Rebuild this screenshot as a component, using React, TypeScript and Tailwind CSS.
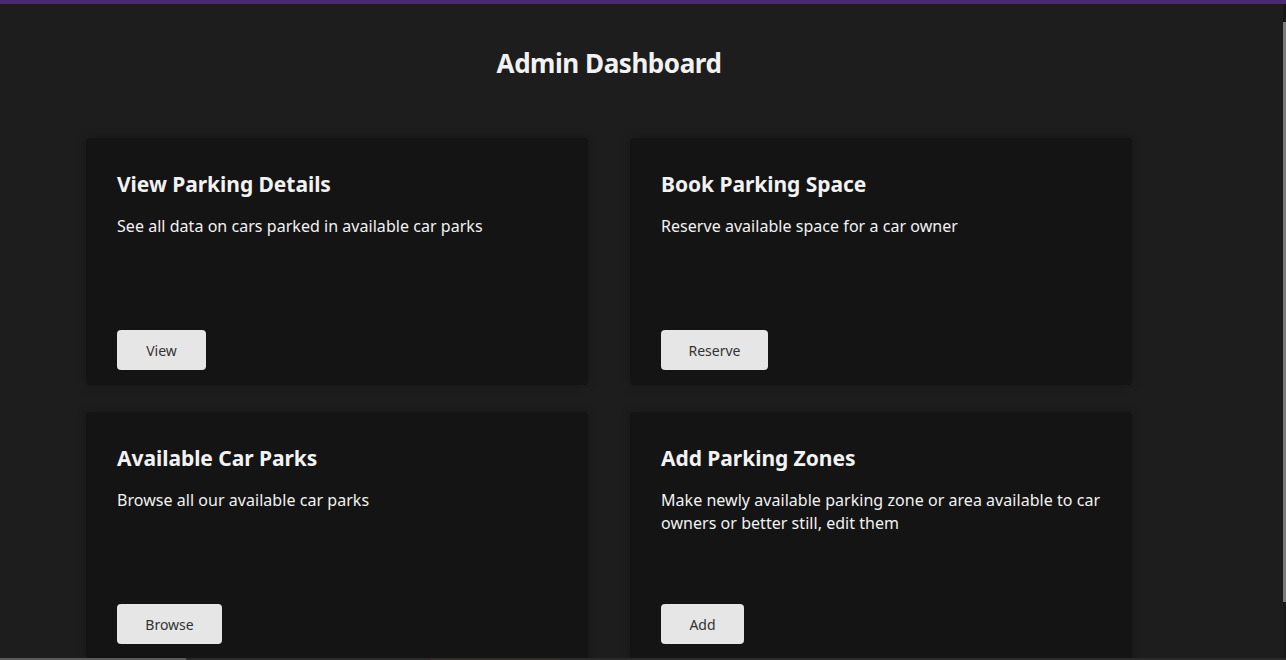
import React from "react";

const cards = [
  { title: "View Parking Details", desc: "See all data on cars parked in available car parks", btn: "View", w: "w-[89px]" },
  { title: "Book Parking Space", desc: "Reserve available space for a car owner", btn: "Reserve", w: "w-[107px]" },
  { title: "Available Car Parks", desc: "Browse all our available car parks", btn: "Browse", w: "w-[105px]" },
  { title: "Add Parking Zones", desc: "Make newly available parking zone or area available to car owners or better still, edit them", btn: "Add", w: "w-[83px]" },
];

export default function App() {
  return (
    <div
      className="h-[660px] w-[1286px] overflow-hidden flex flex-col bg-[#1d1d1d] text-[#f2f2f2]"
      style={{ fontFamily: '"Noto Sans", "Open Sans", sans-serif' }}
    >
      <div className="h-[4px] bg-[#4a2a72] shrink-0" />
      <div className="flex flex-1 overflow-hidden">
        <div className="flex-1 overflow-hidden">
          <div className="ml-[86px] w-[1046px]">
            <h1 className="text-center text-[26px] font-bold leading-[36px] pt-[41px] tracking-[-0.45px]">
              Admin Dashboard
            </h1>
            <div className="grid grid-cols-2 gap-x-[42px] gap-y-[27px] mt-[57px]">
              {cards.map((c) => (
                <div
                  key={c.title}
                  className="h-[247px] bg-[#141414] rounded-[4px] shadow-[0_0_10px_rgba(0,0,0,0.25)] flex flex-col pl-[31px] pr-[24px] pt-[32px] pb-[15px]"
                >
                  <h2 className="text-[21px] font-bold leading-[28px] tracking-[-0.05px]">{c.title}</h2>
                  <p className="mt-[17px] text-[16px] leading-[23px] tracking-[0.04px]">{c.desc}</p>
                  <div className="mt-auto">
                    <button
                      className={`${c.w} h-[40px] rounded-[4px] bg-[#e6e6e6] text-[#333] text-[14px]`}
                    >
                      {c.btn}
                    </button>
                  </div>
                </div>
              ))}
            </div>
          </div>
        </div>
        <div className="w-[3px] shrink-0 flex flex-col bg-[#1a1a1a]">
          <div className="h-[18px] bg-[#161616]" />
          <div className="h-[580px] bg-[#7a7a7a]" />
        </div>
      </div>
      <div className="h-[2px] shrink-0 flex bg-[#2a2a2a]">
        <div className="w-[186px] bg-[#5a5a5a]" />
        <div className="w-[244px]" />
        <div className="w-[130px] bg-[#3a2a26]" />
        <div className="flex-1" />
      </div>
    </div>
  );
}
